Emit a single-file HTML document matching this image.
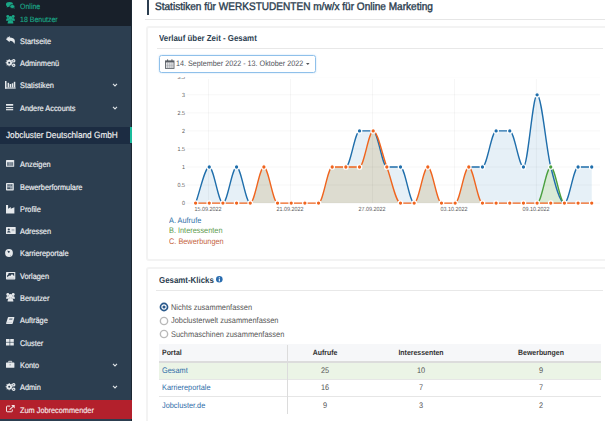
<!DOCTYPE html>
<html><head><meta charset="utf-8"><title>Statistiken</title>
<style>
html,body{margin:0;padding:0;}
body{width:605px;height:421px;overflow:hidden;position:relative;background:#fff;font-family:"Liberation Sans",sans-serif;}
.t{position:absolute;white-space:nowrap;text-rendering:geometricPrecision;}
.r{position:absolute;}
svg{position:absolute;overflow:visible;}
</style></head><body>
<div class='r' style='left:0.00px;top:0.00px;width:131.80px;height:421.00px;background:#2c3e50;'></div>
<div class='r' style='left:0.00px;top:0.00px;width:131.80px;height:25.70px;background:#18202a;'></div>
<div class='r' style='left:131.00px;top:0.00px;width:0.80px;height:421.00px;background:#1c2833;'></div>
<div class='t' style='left:19.80px;top:1.80px;font-size:7.7px;line-height:9.24px;color:#1aa786;-webkit-text-stroke:0.15px #1aa786;transform:scaleX(0.9091);transform-origin:left top;'>Online</div>
<div class='t' style='left:20.20px;top:15.00px;font-size:7.7px;line-height:9.24px;color:#1aa786;-webkit-text-stroke:0.15px #1aa786;transform:scaleX(0.9091);transform-origin:left top;'>18 Benutzer</div>
<div class='t' style='left:19.70px;top:36.90px;font-size:8.1px;line-height:9.72px;color:#eceef0;-webkit-text-stroke:0.18px #eceef0;transform:scaleX(0.9074);transform-origin:left top;'>Startseite</div>
<div class='t' style='left:19.70px;top:58.90px;font-size:8.1px;line-height:9.72px;color:#eceef0;-webkit-text-stroke:0.18px #eceef0;transform:scaleX(0.9074);transform-origin:left top;'>Adminmenü</div>
<div class='t' style='left:19.70px;top:81.00px;font-size:8.1px;line-height:9.72px;color:#eceef0;-webkit-text-stroke:0.18px #eceef0;transform:scaleX(0.9074);transform-origin:left top;'>Statistiken</div>
<div class='t' style='left:19.70px;top:103.50px;font-size:8.1px;line-height:9.72px;color:#eceef0;-webkit-text-stroke:0.18px #eceef0;transform:scaleX(0.9074);transform-origin:left top;'>Andere Accounts</div>
<svg style='left:111.60px;top:82.20px' width='6' height='6' viewBox='0 0 6 6'><path d='M1 1.8 L3 3.9 L5 1.8' fill='none' stroke='#dfe3e6' stroke-width='1.1'/></svg>
<svg style='left:111.60px;top:104.50px' width='6' height='6' viewBox='0 0 6 6'><path d='M1 1.8 L3 3.9 L5 1.8' fill='none' stroke='#dfe3e6' stroke-width='1.1'/></svg>
<div class='r' style='left:0.00px;top:127.40px;width:131.80px;height:16.20px;background:#1c2c42;'></div>
<div class='r' style='left:129.70px;top:126.90px;width:2.10px;height:16.50px;background:#1abc9c;'></div>
<div class='t' style='left:5.80px;top:130.20px;font-size:9.1px;line-height:10.92px;color:#f2f2f2;-webkit-text-stroke:0.15px #f2f2f2;transform:scaleX(0.9066);transform-origin:left top;'>Jobcluster Deutschland GmbH</div>
<div class='t' style='left:19.70px;top:160.10px;font-size:8.1px;line-height:9.72px;color:#eceef0;-webkit-text-stroke:0.18px #eceef0;transform:scaleX(0.9074);transform-origin:left top;'>Anzeigen</div>
<div class='t' style='left:19.70px;top:182.50px;font-size:8.1px;line-height:9.72px;color:#eceef0;-webkit-text-stroke:0.18px #eceef0;transform:scaleX(0.9074);transform-origin:left top;'>Bewerberformulare</div>
<div class='t' style='left:19.70px;top:205.00px;font-size:8.1px;line-height:9.72px;color:#eceef0;-webkit-text-stroke:0.18px #eceef0;transform:scaleX(0.9074);transform-origin:left top;'>Profile</div>
<div class='t' style='left:19.70px;top:227.00px;font-size:8.1px;line-height:9.72px;color:#eceef0;-webkit-text-stroke:0.18px #eceef0;transform:scaleX(0.9074);transform-origin:left top;'>Adressen</div>
<div class='t' style='left:19.70px;top:249.00px;font-size:8.1px;line-height:9.72px;color:#eceef0;-webkit-text-stroke:0.18px #eceef0;transform:scaleX(0.9074);transform-origin:left top;'>Karriereportale</div>
<div class='t' style='left:19.70px;top:271.50px;font-size:8.1px;line-height:9.72px;color:#eceef0;-webkit-text-stroke:0.18px #eceef0;transform:scaleX(0.9074);transform-origin:left top;'>Vorlagen</div>
<div class='t' style='left:19.70px;top:293.50px;font-size:8.1px;line-height:9.72px;color:#eceef0;-webkit-text-stroke:0.18px #eceef0;transform:scaleX(0.9074);transform-origin:left top;'>Benutzer</div>
<div class='t' style='left:19.70px;top:315.90px;font-size:8.1px;line-height:9.72px;color:#eceef0;-webkit-text-stroke:0.18px #eceef0;transform:scaleX(0.9074);transform-origin:left top;'>Aufträge</div>
<div class='t' style='left:19.70px;top:338.60px;font-size:8.1px;line-height:9.72px;color:#eceef0;-webkit-text-stroke:0.18px #eceef0;transform:scaleX(0.9074);transform-origin:left top;'>Cluster</div>
<div class='t' style='left:19.70px;top:360.50px;font-size:8.1px;line-height:9.72px;color:#eceef0;-webkit-text-stroke:0.18px #eceef0;transform:scaleX(0.9074);transform-origin:left top;'>Konto</div>
<div class='t' style='left:19.70px;top:383.30px;font-size:8.1px;line-height:9.72px;color:#eceef0;-webkit-text-stroke:0.18px #eceef0;transform:scaleX(0.9074);transform-origin:left top;'>Admin</div>
<svg style='left:111.60px;top:361.90px' width='6' height='6' viewBox='0 0 6 6'><path d='M1 1.8 L3 3.9 L5 1.8' fill='none' stroke='#dfe3e6' stroke-width='1.1'/></svg>
<svg style='left:111.60px;top:384.30px' width='6' height='6' viewBox='0 0 6 6'><path d='M1 1.8 L3 3.9 L5 1.8' fill='none' stroke='#dfe3e6' stroke-width='1.1'/></svg>
<div class='r' style='left:0.00px;top:400.20px;width:131.80px;height:19.10px;background:#b3202c;'></div>
<div class='t' style='left:19.70px;top:405.60px;font-size:8.1px;line-height:9.72px;color:#f4e6e7;-webkit-text-stroke:0.18px #f4e6e7;transform:scaleX(0.9074);transform-origin:left top;'>Zum Jobrecommender</div>
<svg style='left:5.60px;top:2.40px' width='8.8' height='6.8' viewBox='0 0 8.8 6.8'><ellipse cx='3.5' cy='2.4' rx='3.5' ry='2.35' fill='#1aa786'/><path d='M1.2 3.6 L0.7 5.4 L3.2 4.5Z' fill='#1aa786'/><ellipse cx='6.3' cy='4.5' rx='2.5' ry='2.0' fill='#1aa786' stroke='#18202a' stroke-width='0.7'/><path d='M7.4 6.0 L8.7 6.8 L8.2 5.3Z' fill='#1aa786'/></svg>
<svg style='left:5.70px;top:14.70px' width='9.0' height='8.5' viewBox='0 0 9.0 8.5'><circle cx='1.8' cy='1.45' r='1.45' fill='#1aa786'/><circle cx='7.2' cy='1.45' r='1.45' fill='#1aa786'/><path d='M0 5.8 Q0 3.0 1.8 3.0 Q3.2 3.0 3.4 4.2 L3.4 5.8Z' fill='#1aa786'/><path d='M9 5.8 Q9 3.0 7.2 3.0 Q5.8 3.0 5.6 4.2 L5.6 5.8Z' fill='#1aa786'/><circle cx='4.5' cy='3.0' r='1.9' fill='#1aa786'/><path d='M1.6 8.5 Q1.6 4.9 4.5 4.9 Q7.4 4.9 7.4 8.5Z' fill='#1aa786'/></svg>
<svg style='left:5.60px;top:36.20px' width='9' height='8' viewBox='0 0 9 8'><path d='M3.7 0.1 L0 3.3 L3.7 6.3 L3.7 4.7 Q6.9 4.6 8.3 7.9 Q9.3 6.2 8.7 4.1 Q7.8 1.6 3.7 1.6 Z' fill='#e6e9ec'/><path d='M2 0.9 L0.6 2.2' stroke='#e6e9ec' stroke-width='0.5'/></svg>
<svg style='left:6.00px;top:59.00px' width='9.6' height='8' viewBox='0 0 9.6 8'><rect x='2.75' y='0.15' width='0.9' height='1.0' fill='#e6e9ec' transform='rotate(0 3.2 3.7)'/><rect x='2.75' y='0.15' width='0.9' height='1.0' fill='#e6e9ec' transform='rotate(45 3.2 3.7)'/><rect x='2.75' y='0.15' width='0.9' height='1.0' fill='#e6e9ec' transform='rotate(90 3.2 3.7)'/><rect x='2.75' y='0.15' width='0.9' height='1.0' fill='#e6e9ec' transform='rotate(135 3.2 3.7)'/><rect x='2.75' y='0.15' width='0.9' height='1.0' fill='#e6e9ec' transform='rotate(180 3.2 3.7)'/><rect x='2.75' y='0.15' width='0.9' height='1.0' fill='#e6e9ec' transform='rotate(225 3.2 3.7)'/><rect x='2.75' y='0.15' width='0.9' height='1.0' fill='#e6e9ec' transform='rotate(270 3.2 3.7)'/><rect x='2.75' y='0.15' width='0.9' height='1.0' fill='#e6e9ec' transform='rotate(315 3.2 3.7)'/><circle cx='3.2' cy='3.7' r='1.95' fill='none' stroke='#e6e9ec' stroke-width='1.9'/><circle cx='7.7' cy='1.7' r='1.15' fill='none' stroke='#e6e9ec' stroke-width='1.2'/><circle cx='7.7' cy='6.2' r='1.15' fill='none' stroke='#e6e9ec' stroke-width='1.2'/></svg>
<svg style='left:6.00px;top:383.00px' width='9.6' height='8' viewBox='0 0 9.6 8'><rect x='2.75' y='0.15' width='0.9' height='1.0' fill='#e6e9ec' transform='rotate(0 3.2 3.7)'/><rect x='2.75' y='0.15' width='0.9' height='1.0' fill='#e6e9ec' transform='rotate(45 3.2 3.7)'/><rect x='2.75' y='0.15' width='0.9' height='1.0' fill='#e6e9ec' transform='rotate(90 3.2 3.7)'/><rect x='2.75' y='0.15' width='0.9' height='1.0' fill='#e6e9ec' transform='rotate(135 3.2 3.7)'/><rect x='2.75' y='0.15' width='0.9' height='1.0' fill='#e6e9ec' transform='rotate(180 3.2 3.7)'/><rect x='2.75' y='0.15' width='0.9' height='1.0' fill='#e6e9ec' transform='rotate(225 3.2 3.7)'/><rect x='2.75' y='0.15' width='0.9' height='1.0' fill='#e6e9ec' transform='rotate(270 3.2 3.7)'/><rect x='2.75' y='0.15' width='0.9' height='1.0' fill='#e6e9ec' transform='rotate(315 3.2 3.7)'/><circle cx='3.2' cy='3.7' r='1.95' fill='none' stroke='#e6e9ec' stroke-width='1.9'/><circle cx='7.7' cy='1.7' r='1.15' fill='none' stroke='#e6e9ec' stroke-width='1.2'/><circle cx='7.7' cy='6.2' r='1.15' fill='none' stroke='#e6e9ec' stroke-width='1.2'/></svg>
<svg style='left:5.00px;top:80.80px' width='10.7' height='7.6' viewBox='0 0 10.7 7.6'><rect x='0' y='0' width='1.5' height='7.6' fill='#e6e9ec'/><rect x='0' y='6.5' width='10.7' height='1.1' fill='#e6e9ec'/><rect x='2.6' y='1.8' width='1.5' height='4.7' fill='#e6e9ec'/><rect x='4.7' y='3.0' width='1.5' height='3.5' fill='#e6e9ec'/><rect x='6.8' y='2.3' width='1.5' height='4.2' fill='#e6e9ec'/><rect x='8.8' y='0.8' width='1.5' height='5.7' fill='#e6e9ec'/></svg>
<svg style='left:5.80px;top:104.00px' width='7.2' height='6.4' viewBox='0 0 7.2 6.4'><rect x='0' y='0' width='7.2' height='1.7' fill='#e6e9ec'/><rect x='0' y='3.0' width='7.2' height='1.2' fill='#e6e9ec'/><rect x='0' y='5.1' width='7.2' height='1.2' fill='#e6e9ec'/></svg>
<svg style='left:5.80px;top:160.20px' width='8.2' height='6.8' viewBox='0 0 8.2 6.8'><rect x='0' y='0' width='8.2' height='6.8' rx='0.6' fill='#e6e9ec'/><rect x='1.0' y='2.2' width='6.2' height='3.6' fill='#6e7c8a'/><rect x='2.9' y='2.2' width='0.6' height='3.6' fill='#a9b2bb'/><rect x='4.7' y='2.2' width='0.6' height='3.6' fill='#a9b2bb'/></svg>
<svg style='left:5.60px;top:182.80px' width='7.8' height='7.4' viewBox='0 0 7.8 7.4'><rect x='0' y='0' width='7.8' height='7.4' rx='0.7' fill='#e6e9ec'/><rect x='1.0' y='1.0' width='5.8' height='5.4' fill='#9aa5b0'/><circle cx='2.2' cy='2.1' r='0.55' fill='#2c3e50'/><circle cx='3.9' cy='2.1' r='0.55' fill='#2c3e50'/><circle cx='5.6' cy='2.1' r='0.55' fill='#2c3e50'/><rect x='1.4' y='4.6' width='2.6' height='1.2' fill='#2c3e50'/><rect x='4.0' y='5.0' width='2.2' height='0.6' fill='#5d6b79'/></svg>
<svg style='left:5.80px;top:204.60px' width='8.4' height='8.4' viewBox='0 0 8.4 8.4'><path d='M0 8.4 V0 H2.1 V3.8 L4.8 2.0 L4.8 3.8 L8.4 2.2 V8.4Z' fill='#e6e9ec'/></svg>
<svg style='left:5.80px;top:227.00px' width='9.7' height='7.0' viewBox='0 0 9.7 7.0'><rect x='0' y='0' width='9.7' height='7.0' rx='0.6' fill='#e6e9ec'/><circle cx='2.8' cy='2.5' r='1.1' fill='#2c3e50'/><path d='M1.0 5.6 Q1.0 3.9 2.8 3.9 Q4.6 3.9 4.6 5.6Z' fill='#2c3e50'/><rect x='5.6' y='2.0' width='2.8' height='0.7' fill='#9aa4ae'/><rect x='5.6' y='3.4' width='2.8' height='0.7' fill='#9aa4ae'/></svg>
<svg style='left:5.40px;top:249.20px' width='8' height='8' viewBox='0 0 8 8'><circle cx='4' cy='4' r='3.9' fill='#e6e9ec'/><path d='M2.4 1.7 Q3.6 1.5 4.2 2.3 L5.0 1.9 Q4.6 3.6 3.6 4.1 Q2.8 3.2 2.4 1.7Z' fill='#2c3e50'/><circle cx='5.6' cy='6.2' r='0.5' fill='#9aa4ae'/></svg>
<svg style='left:5.60px;top:271.80px' width='9.3' height='7.4' viewBox='0 0 9.3 7.4'><rect x='0' y='0' width='9.3' height='7.4' rx='0.6' fill='#e6e9ec'/><path d='M2.6 1.1 H8.2 V4.2 L6.0 2.0 L4.2 4.0 L3.4 3.4 L1.1 5.2 V3.4 Q2.6 3.0 2.6 1.1Z' fill='#2c3e50'/><rect x='1.1' y='5.8' width='7.1' height='0.6' fill='#aab3bc'/></svg>
<svg style='left:5.80px;top:293.40px' width='9.0' height='8.5' viewBox='0 0 9.0 8.5'><circle cx='1.8' cy='1.45' r='1.45' fill='#e6e9ec'/><circle cx='7.2' cy='1.45' r='1.45' fill='#e6e9ec'/><path d='M0 5.8 Q0 3.0 1.8 3.0 Q3.2 3.0 3.4 4.2 L3.4 5.8Z' fill='#e6e9ec'/><path d='M9 5.8 Q9 3.0 7.2 3.0 Q5.8 3.0 5.6 4.2 L5.6 5.8Z' fill='#e6e9ec'/><circle cx='4.5' cy='3.0' r='1.9' fill='#e6e9ec'/><path d='M1.6 8.5 Q1.6 4.9 4.5 4.9 Q7.4 4.9 7.4 8.5Z' fill='#e6e9ec'/></svg>
<svg style='left:5.80px;top:316.60px' width='8.5' height='6.9' viewBox='0 0 8.5 6.9'><path d='M2.6 0 H7.9 Q8.5 0 8.4 0.6 L6.8 6.3 Q6.6 6.9 6.0 6.9 H0.6 Q0 6.9 0.1 6.3 L1.9 0.6 Q2.0 0 2.6 0Z' fill='#e6e9ec'/><path d='M3.5 1.3 H6.6 L6.2 3.1 H3.0Z' fill='#8592a0'/><path d='M0.6 5.4 H6.3 L6.1 6.1 H0.4Z' fill='#b9c1c9'/></svg>
<svg style='left:5.80px;top:338.90px' width='7.8' height='6.5' viewBox='0 0 7.8 6.5'><rect x='0' y='0' width='3.6' height='2.9' fill='#e6e9ec'/><rect x='4.2' y='0' width='3.6' height='2.9' fill='#e6e9ec'/><rect x='0' y='3.5' width='3.6' height='3.0' fill='#e6e9ec'/><rect x='4.2' y='3.5' width='3.6' height='3.0' fill='#e6e9ec'/></svg>
<svg style='left:5.80px;top:360.60px' width='8.4' height='6.8' viewBox='0 0 8.4 6.8'><path d='M2.7 1.5 V0.3 H5.7 V1.5' fill='none' stroke='#e6e9ec' stroke-width='0.9'/><rect x='0' y='1.4' width='8.4' height='5.4' rx='0.6' fill='#e6e9ec'/><rect x='3.4' y='3.4' width='1.6' height='0.9' fill='#8a96a2'/></svg>
<svg style='left:5.80px;top:405.30px' width='8.7' height='7.3' viewBox='0 0 8.7 7.3'><path d='M4.2 1.1 H1.2 Q0.5 1.1 0.5 1.8 V6.1 Q0.5 6.8 1.2 6.8 H5.6 Q6.3 6.8 6.3 6.1 V4.4' fill='none' stroke='#f4e6e7' stroke-width='1'/><path d='M5.2 0 H8.7 V3.5Z' fill='#f4e6e7'/><path d='M7.8 0.9 L3.6 4.6' stroke='#f4e6e7' stroke-width='1.1'/></svg>
<div class='r' style='left:146.80px;top:0.00px;width:2.40px;height:14.50px;background:#2c3e50;'></div>
<div class='t' style='left:154.50px;top:1.20px;font-size:10.9px;line-height:13.08px;color:#2c3e50;-webkit-text-stroke:0.4px #2c3e50;transform:scaleX(0.9239);transform-origin:left top;'>Statistiken für WERKSTUDENTEN m/w/x für Online Marketing</div>
<div class='r' style='left:145.00px;top:19.00px;width:460.00px;height:1.20px;background:#e6e6e6;'></div>
<div class='r' style='left:146.3px;top:25.7px;width:480px;height:235.3px;border:2.6px solid #f3f3f3;border-radius:3px;box-sizing:border-box;'></div>
<div class='t' style='left:159.30px;top:33.40px;font-size:8.7px;line-height:10.44px;color:#2c3e50;font-weight:bold;transform:scaleX(0.9080);transform-origin:left top;'>Verlauf über Zeit - Gesamt</div>
<div class='r' style='left:156.90px;top:47.60px;width:446.50px;height:1.20px;background:#e8e8e8;'></div>
<div class='r' style='left:159.3px;top:55.2px;width:157.0px;height:17.4px;border:1.3px solid #8fc0ea;border-radius:2.5px;box-sizing:border-box;box-shadow:0 0 1.5px rgba(102,175,233,0.55);'></div>
<svg style='left:164.90px;top:59.00px' width='9.5' height='9.9' viewBox='0 0 9.5 9.9'><rect x='0.5' y='1.9' width='8.5' height='7.5' fill='#fff' stroke='#5a5f66' stroke-width='0.9'/><rect x='0.5' y='1.9' width='8.5' height='1.6' fill='#5a5f66'/><path d='M0.9 5.1 H8.6 M0.9 6.6 H8.6 M0.9 8.0 H8.6 M2.6 3.5 V9.3 M4.75 3.5 V9.3 M6.9 3.5 V9.3' stroke='#8b9096' stroke-width='0.5'/><rect x='2.0' y='0.2' width='1.1' height='2.3' rx='0.5' fill='#5a5f66'/><rect x='6.4' y='0.2' width='1.1' height='2.3' rx='0.5' fill='#5a5f66'/></svg>
<div class='t' style='left:176.20px;top:59.10px;font-size:7.9px;line-height:9.48px;color:#505459;transform:scaleX(0.9114);transform-origin:left top;'>14. September 2022 - 13. Oktober 2022</div>
<svg style='left:305.80px;top:63.00px' width='3.6' height='2.2' viewBox='0 0 3.6 2.2'><path d='M0 0 H3.6 L1.8 2.1Z' fill='#505459'/></svg>
<div class='r' style='left:0;top:77.0px;width:605px;height:140px;overflow:hidden'><svg style='left:0;top:0' width='605' height='140' viewBox='0 0 605 140'><path d='M195.6 126.1 C200.15 114.07 204.71 90.0 209.26 90.0 C213.81 90.0 218.37 126.1 222.92 126.1 C227.47 126.1 232.03 90.0 236.58 90.0 C241.13 90.0 245.69 126.1 250.24 126.1 C254.79 126.1 259.35 90.0 263.9 90.0 C268.45 90.0 273.01 126.1 277.56 126.1 C282.11 126.1 286.67 126.1 291.22 126.1 C295.77 126.1 300.33 126.1 304.88 126.1 C309.43 126.1 313.99 126.1 318.54 126.1 C323.09 126.1 327.65 90.0 332.2 90.0 C336.75 90.0 341.31 90.0 345.86 90.0 C350.41 90.0 354.97 53.9 359.52 53.9 C364.07 53.9 368.63 53.9 373.18 53.9 C377.73 53.9 382.29 90.0 386.84 90.0 C391.39 90.0 395.95 90.0 400.5 90.0 C405.05 90.0 409.61 126.1 414.16 126.1 C418.71 126.1 423.27 90.0 427.82 90.0 C432.37 90.0 436.93 126.1 441.48 126.1 C446.03 126.1 450.59 126.1 455.14 126.1 C459.69 126.1 464.25 90.0 468.8 90.0 C473.35 90.0 477.91 90.0 482.46 90.0 C487.01 90.0 491.57 53.9 496.12 53.9 C500.67 53.9 505.23 53.9 509.78 53.9 C514.33 53.9 518.89 90.0 523.44 90.0 C527.99 90.0 532.55 17.8 537.1 17.8 C541.65 17.8 546.21 71.95 550.76 90.0 C555.31 108.05 559.87 126.1 564.42 126.1 C568.97 126.1 573.53 90.0 578.08 90.0 C582.63 90.0 587.19 90.0 591.74 90.0 L591.74 126.10 L195.60 126.10Z' fill='#e6f0f7' stroke='none'/><path d='M195.6 126.1 C200.15 126.1 204.71 126.1 209.26 126.1 C213.81 126.1 218.37 126.1 222.92 126.1 C227.47 126.1 232.03 126.1 236.58 126.1 C241.13 126.1 245.69 126.1 250.24 126.1 C254.79 126.1 259.35 90.0 263.9 90.0 C268.45 90.0 273.01 126.1 277.56 126.1 C282.11 126.1 286.67 126.1 291.22 126.1 C295.77 126.1 300.33 126.1 304.88 126.1 C309.43 126.1 313.99 126.1 318.54 126.1 C323.09 126.1 327.65 90.0 332.2 90.0 C336.75 90.0 341.31 90.0 345.86 90.0 C350.41 90.0 354.97 90.0 359.52 90.0 C364.07 90.0 368.63 53.9 373.18 53.9 C377.73 53.9 382.29 77.97 386.84 90.0 C391.39 102.03 395.95 126.1 400.5 126.1 C405.05 126.1 409.61 126.1 414.16 126.1 C418.71 126.1 423.27 90.0 427.82 90.0 C432.37 90.0 436.93 126.1 441.48 126.1 C446.03 126.1 450.59 126.1 455.14 126.1 C459.69 126.1 464.25 90.0 468.8 90.0 C473.35 90.0 477.91 126.1 482.46 126.1 C487.01 126.1 491.57 126.1 496.12 126.1 C500.67 126.1 505.23 126.1 509.78 126.1 C514.33 126.1 518.89 126.1 523.44 126.1 C527.99 126.1 532.55 126.1 537.1 126.1 C541.65 126.1 546.21 90.0 550.76 90.0 C555.31 90.0 559.87 126.1 564.42 126.1 C568.97 126.1 573.53 126.1 578.08 126.1 C582.63 126.1 587.19 126.1 591.74 126.1 L591.74 126.10 L195.60 126.10Z' fill='#d9ead6' stroke='none'/><path d='M195.6 126.1 C200.15 126.1 204.71 126.1 209.26 126.1 C213.81 126.1 218.37 126.1 222.92 126.1 C227.47 126.1 232.03 126.1 236.58 126.1 C241.13 126.1 245.69 126.1 250.24 126.1 C254.79 126.1 259.35 90.0 263.9 90.0 C268.45 90.0 273.01 126.1 277.56 126.1 C282.11 126.1 286.67 126.1 291.22 126.1 C295.77 126.1 300.33 126.1 304.88 126.1 C309.43 126.1 313.99 126.1 318.54 126.1 C323.09 126.1 327.65 90.0 332.2 90.0 C336.75 90.0 341.31 90.0 345.86 90.0 C350.41 90.0 354.97 90.0 359.52 90.0 C364.07 90.0 368.63 53.9 373.18 53.9 C377.73 53.9 382.29 77.97 386.84 90.0 C391.39 102.03 395.95 126.1 400.5 126.1 C405.05 126.1 409.61 126.1 414.16 126.1 C418.71 126.1 423.27 90.0 427.82 90.0 C432.37 90.0 436.93 126.1 441.48 126.1 C446.03 126.1 450.59 126.1 455.14 126.1 C459.69 126.1 464.25 90.0 468.8 90.0 C473.35 90.0 477.91 126.1 482.46 126.1 C487.01 126.1 491.57 126.1 496.12 126.1 C500.67 126.1 505.23 126.1 509.78 126.1 C514.33 126.1 518.89 126.1 523.44 126.1 C527.99 126.1 532.55 126.1 537.1 126.1 C541.65 126.1 546.21 126.1 550.76 126.1 C555.31 126.1 559.87 126.1 564.42 126.1 C568.97 126.1 573.53 126.1 578.08 126.1 C582.63 126.1 587.19 126.1 591.74 126.1 L591.74 126.10 L195.60 126.10Z' fill='#dddcd0' stroke='none'/><line x1='186.4' y1='126.10' x2='600' y2='126.10' stroke='rgba(0,0,0,0.035)' stroke-width='1'/><line x1='186.4' y1='108.05' x2='600' y2='108.05' stroke='rgba(0,0,0,0.035)' stroke-width='1'/><line x1='186.4' y1='90.00' x2='600' y2='90.00' stroke='rgba(0,0,0,0.035)' stroke-width='1'/><line x1='186.4' y1='71.95' x2='600' y2='71.95' stroke='rgba(0,0,0,0.035)' stroke-width='1'/><line x1='186.4' y1='53.90' x2='600' y2='53.90' stroke='rgba(0,0,0,0.035)' stroke-width='1'/><line x1='186.4' y1='35.85' x2='600' y2='35.85' stroke='rgba(0,0,0,0.035)' stroke-width='1'/><line x1='186.4' y1='17.80' x2='600' y2='17.80' stroke='rgba(0,0,0,0.035)' stroke-width='1'/><line x1='186.4' y1='-0.25' x2='600' y2='-0.25' stroke='rgba(0,0,0,0.035)' stroke-width='1'/><line x1='208.56' y1='2' x2='208.56' y2='126.10' stroke='rgba(0,0,0,0.04)' stroke-width='1'/><line x1='290.52' y1='2' x2='290.52' y2='126.10' stroke='rgba(0,0,0,0.04)' stroke-width='1'/><line x1='372.48' y1='2' x2='372.48' y2='126.10' stroke='rgba(0,0,0,0.04)' stroke-width='1'/><line x1='454.44' y1='2' x2='454.44' y2='126.10' stroke='rgba(0,0,0,0.04)' stroke-width='1'/><line x1='536.40' y1='2' x2='536.40' y2='126.10' stroke='rgba(0,0,0,0.04)' stroke-width='1'/><path d='M195.6 126.1 C200.15 114.07 204.71 90.0 209.26 90.0 C213.81 90.0 218.37 126.1 222.92 126.1 C227.47 126.1 232.03 90.0 236.58 90.0 C241.13 90.0 245.69 126.1 250.24 126.1 M345.86 90.0 C350.41 90.0 354.97 53.9 359.52 53.9 C364.07 53.9 368.63 53.9 373.18 53.9 C377.73 53.9 382.29 90.0 386.84 90.0 C391.39 90.0 395.95 90.0 400.5 90.0 C405.05 90.0 409.61 126.1 414.16 126.1 M468.8 90.0 C473.35 90.0 477.91 90.0 482.46 90.0 C487.01 90.0 491.57 53.9 496.12 53.9 C500.67 53.9 505.23 53.9 509.78 53.9 C514.33 53.9 518.89 90.0 523.44 90.0 C527.99 90.0 532.55 17.8 537.1 17.8 C541.65 17.8 546.21 71.95 550.76 90.0 C555.31 108.05 559.87 126.1 564.42 126.1 C568.97 126.1 573.53 90.0 578.08 90.0 C582.63 90.0 587.19 90.0 591.74 90.0' fill='none' stroke='#1f6eab' stroke-width='1.4'/><circle cx='209.26' cy='90.00' r='2.25' fill='#1f6eab' stroke='#fff' stroke-width='1.2'/><circle cx='236.58' cy='90.00' r='2.25' fill='#1f6eab' stroke='#fff' stroke-width='1.2'/><circle cx='359.52' cy='53.90' r='2.25' fill='#1f6eab' stroke='#fff' stroke-width='1.2'/><circle cx='400.50' cy='90.00' r='2.25' fill='#1f6eab' stroke='#fff' stroke-width='1.2'/><circle cx='482.46' cy='90.00' r='2.25' fill='#1f6eab' stroke='#fff' stroke-width='1.2'/><circle cx='496.12' cy='53.90' r='2.25' fill='#1f6eab' stroke='#fff' stroke-width='1.2'/><circle cx='509.78' cy='53.90' r='2.25' fill='#1f6eab' stroke='#fff' stroke-width='1.2'/><circle cx='523.44' cy='90.00' r='2.25' fill='#1f6eab' stroke='#fff' stroke-width='1.2'/><circle cx='537.10' cy='17.80' r='2.25' fill='#1f6eab' stroke='#fff' stroke-width='1.2'/><circle cx='578.08' cy='90.00' r='2.25' fill='#1f6eab' stroke='#fff' stroke-width='1.2'/><circle cx='591.74' cy='90.00' r='2.25' fill='#1f6eab' stroke='#fff' stroke-width='1.2'/><path d='M537.1 126.1 C541.65 126.1 546.21 90.0 550.76 90.0 C555.31 90.0 559.87 126.1 564.42 126.1' fill='none' stroke='#4aa03f' stroke-width='1.4'/><circle cx='550.76' cy='90.00' r='2.25' fill='#4aa03f' stroke='#fff' stroke-width='1.2'/><path d='M195.6 126.1 C200.15 126.1 204.71 126.1 209.26 126.1 C213.81 126.1 218.37 126.1 222.92 126.1 C227.47 126.1 232.03 126.1 236.58 126.1 C241.13 126.1 245.69 126.1 250.24 126.1 C254.79 126.1 259.35 90.0 263.9 90.0 C268.45 90.0 273.01 126.1 277.56 126.1 C282.11 126.1 286.67 126.1 291.22 126.1 C295.77 126.1 300.33 126.1 304.88 126.1 C309.43 126.1 313.99 126.1 318.54 126.1 C323.09 126.1 327.65 90.0 332.2 90.0 C336.75 90.0 341.31 90.0 345.86 90.0 C350.41 90.0 354.97 90.0 359.52 90.0 C364.07 90.0 368.63 53.9 373.18 53.9 C377.73 53.9 382.29 77.97 386.84 90.0 C391.39 102.03 395.95 126.1 400.5 126.1 C405.05 126.1 409.61 126.1 414.16 126.1 C418.71 126.1 423.27 90.0 427.82 90.0 C432.37 90.0 436.93 126.1 441.48 126.1 C446.03 126.1 450.59 126.1 455.14 126.1 C459.69 126.1 464.25 90.0 468.8 90.0 C473.35 90.0 477.91 126.1 482.46 126.1 C487.01 126.1 491.57 126.1 496.12 126.1 C500.67 126.1 505.23 126.1 509.78 126.1 C514.33 126.1 518.89 126.1 523.44 126.1 C527.99 126.1 532.55 126.1 537.1 126.1 C541.65 126.1 546.21 126.1 550.76 126.1 C555.31 126.1 559.87 126.1 564.42 126.1 C568.97 126.1 573.53 126.1 578.08 126.1 C582.63 126.1 587.19 126.1 591.74 126.1' fill='none' stroke='#f0641e' stroke-width='1.4'/><circle cx='195.60' cy='126.10' r='2.25' fill='#f0641e' stroke='#fff' stroke-width='1.2'/><circle cx='209.26' cy='126.10' r='2.25' fill='#f0641e' stroke='#fff' stroke-width='1.2'/><circle cx='222.92' cy='126.10' r='2.25' fill='#f0641e' stroke='#fff' stroke-width='1.2'/><circle cx='236.58' cy='126.10' r='2.25' fill='#f0641e' stroke='#fff' stroke-width='1.2'/><circle cx='250.24' cy='126.10' r='2.25' fill='#f0641e' stroke='#fff' stroke-width='1.2'/><circle cx='263.90' cy='90.00' r='2.25' fill='#f0641e' stroke='#fff' stroke-width='1.2'/><circle cx='277.56' cy='126.10' r='2.25' fill='#f0641e' stroke='#fff' stroke-width='1.2'/><circle cx='291.22' cy='126.10' r='2.25' fill='#f0641e' stroke='#fff' stroke-width='1.2'/><circle cx='304.88' cy='126.10' r='2.25' fill='#f0641e' stroke='#fff' stroke-width='1.2'/><circle cx='318.54' cy='126.10' r='2.25' fill='#f0641e' stroke='#fff' stroke-width='1.2'/><circle cx='332.20' cy='90.00' r='2.25' fill='#f0641e' stroke='#fff' stroke-width='1.2'/><circle cx='345.86' cy='90.00' r='2.25' fill='#f0641e' stroke='#fff' stroke-width='1.2'/><circle cx='359.52' cy='90.00' r='2.25' fill='#f0641e' stroke='#fff' stroke-width='1.2'/><circle cx='373.18' cy='53.90' r='2.25' fill='#f0641e' stroke='#fff' stroke-width='1.2'/><circle cx='386.84' cy='90.00' r='2.25' fill='#f0641e' stroke='#fff' stroke-width='1.2'/><circle cx='400.50' cy='126.10' r='2.25' fill='#f0641e' stroke='#fff' stroke-width='1.2'/><circle cx='414.16' cy='126.10' r='2.25' fill='#f0641e' stroke='#fff' stroke-width='1.2'/><circle cx='427.82' cy='90.00' r='2.25' fill='#f0641e' stroke='#fff' stroke-width='1.2'/><circle cx='441.48' cy='126.10' r='2.25' fill='#f0641e' stroke='#fff' stroke-width='1.2'/><circle cx='455.14' cy='126.10' r='2.25' fill='#f0641e' stroke='#fff' stroke-width='1.2'/><circle cx='468.80' cy='90.00' r='2.25' fill='#f0641e' stroke='#fff' stroke-width='1.2'/><circle cx='482.46' cy='126.10' r='2.25' fill='#f0641e' stroke='#fff' stroke-width='1.2'/><circle cx='496.12' cy='126.10' r='2.25' fill='#f0641e' stroke='#fff' stroke-width='1.2'/><circle cx='509.78' cy='126.10' r='2.25' fill='#f0641e' stroke='#fff' stroke-width='1.2'/><circle cx='523.44' cy='126.10' r='2.25' fill='#f0641e' stroke='#fff' stroke-width='1.2'/><circle cx='537.10' cy='126.10' r='2.25' fill='#f0641e' stroke='#fff' stroke-width='1.2'/><circle cx='550.76' cy='126.10' r='2.25' fill='#f0641e' stroke='#fff' stroke-width='1.2'/><circle cx='564.42' cy='126.10' r='2.25' fill='#f0641e' stroke='#fff' stroke-width='1.2'/><circle cx='578.08' cy='126.10' r='2.25' fill='#f0641e' stroke='#fff' stroke-width='1.2'/><circle cx='591.74' cy='126.10' r='2.25' fill='#f0641e' stroke='#fff' stroke-width='1.2'/></svg><div class='t' style='left:-114.60px;width:300px;text-align:right;top:124.10px;font-size:5.95px;line-height:7.14px;color:#5c5c5c;transform:scaleX(0.9076);transform-origin:right top;'>0</div>
<div class='t' style='left:-114.60px;width:300px;text-align:right;top:106.05px;font-size:5.95px;line-height:7.14px;color:#5c5c5c;transform:scaleX(0.9076);transform-origin:right top;'>0.5</div>
<div class='t' style='left:-114.60px;width:300px;text-align:right;top:88.00px;font-size:5.95px;line-height:7.14px;color:#5c5c5c;transform:scaleX(0.9076);transform-origin:right top;'>1</div>
<div class='t' style='left:-114.60px;width:300px;text-align:right;top:69.95px;font-size:5.95px;line-height:7.14px;color:#5c5c5c;transform:scaleX(0.9076);transform-origin:right top;'>1.5</div>
<div class='t' style='left:-114.60px;width:300px;text-align:right;top:51.90px;font-size:5.95px;line-height:7.14px;color:#5c5c5c;transform:scaleX(0.9076);transform-origin:right top;'>2</div>
<div class='t' style='left:-114.60px;width:300px;text-align:right;top:33.85px;font-size:5.95px;line-height:7.14px;color:#5c5c5c;transform:scaleX(0.9076);transform-origin:right top;'>2.5</div>
<div class='t' style='left:-114.60px;width:300px;text-align:right;top:15.80px;font-size:5.95px;line-height:7.14px;color:#5c5c5c;transform:scaleX(0.9076);transform-origin:right top;'>3</div>
<div class='t' style='left:-114.60px;width:300px;text-align:right;top:-2.25px;font-size:5.95px;line-height:7.14px;color:#5c5c5c;transform:scaleX(0.9076);transform-origin:right top;'>3.5</div>
</div>
<div class='t' style='left:108.46px;width:200px;text-align:center;top:206.60px;font-size:5.95px;line-height:7.14px;color:#5c5c5c;transform:scaleX(0.9076);transform-origin:center top;'>15.09.2022</div>
<div class='t' style='left:190.42px;width:200px;text-align:center;top:206.60px;font-size:5.95px;line-height:7.14px;color:#5c5c5c;transform:scaleX(0.9076);transform-origin:center top;'>21.09.2022</div>
<div class='t' style='left:272.38px;width:200px;text-align:center;top:206.60px;font-size:5.95px;line-height:7.14px;color:#5c5c5c;transform:scaleX(0.9076);transform-origin:center top;'>27.09.2022</div>
<div class='t' style='left:354.34px;width:200px;text-align:center;top:206.60px;font-size:5.95px;line-height:7.14px;color:#5c5c5c;transform:scaleX(0.9076);transform-origin:center top;'>03.10.2022</div>
<div class='t' style='left:436.30px;width:200px;text-align:center;top:206.60px;font-size:5.95px;line-height:7.14px;color:#5c5c5c;transform:scaleX(0.9076);transform-origin:center top;'>09.10.2022</div>
<div class='t' style='left:169.00px;top:215.50px;font-size:8.1px;line-height:9.72px;color:#2f6fa8;transform:scaleX(0.9074);transform-origin:left top;'>A. Aufrufe</div>
<div class='t' style='left:169.00px;top:226.00px;font-size:8.1px;line-height:9.72px;color:#5b9a4c;transform:scaleX(0.9074);transform-origin:left top;'>B. Interessenten</div>
<div class='t' style='left:169.00px;top:236.60px;font-size:8.1px;line-height:9.72px;color:#c4623c;transform:scaleX(0.9074);transform-origin:left top;'>C. Bewerbungen</div>
<div class='r' style='left:146.3px;top:266.9px;width:480px;height:200px;border:2.6px solid #f3f3f3;border-radius:3px;box-sizing:border-box;'></div>
<div class='t' style='left:159.00px;top:274.90px;font-size:8.7px;line-height:10.44px;color:#2c3e50;font-weight:bold;transform:scaleX(0.9080);transform-origin:left top;'>Gesamt-Klicks</div>
<svg style='left:215.90px;top:276.40px' width='6.6' height='6.6' viewBox='0 0 6.6 6.6'><circle cx='3.3' cy='3.3' r='3.3' fill='#2a6db0'/><rect x='2.8' y='2.8' width='1.1' height='2.6' fill='#fff'/><rect x='2.8' y='1.3' width='1.1' height='1' fill='#fff'/></svg>
<div class='r' style='left:156.40px;top:290.20px;width:447.00px;height:1.20px;background:#e8e8e8;'></div>
<svg style='left:158.60px;top:302.40px' width='10' height='10' viewBox='0 0 10 10'><circle cx='5' cy='5' r='3.55' fill='#fff' stroke='#2b5a8c' stroke-width='1.7'/><circle cx='5' cy='5' r='1.55' fill='#2b5a8c'/></svg>
<svg style='left:158.60px;top:315.50px' width='10' height='10' viewBox='0 0 10 10'><circle cx='5' cy='5' r='3.65' fill='#fff' stroke='#b9b9b9' stroke-width='1.4'/></svg>
<svg style='left:158.60px;top:328.70px' width='10' height='10' viewBox='0 0 10 10'><circle cx='5' cy='5' r='3.65' fill='#fff' stroke='#b9b9b9' stroke-width='1.4'/></svg>
<div class='t' style='left:170.60px;top:303.20px;font-size:8.2px;line-height:9.84px;color:#555;transform:scaleX(0.9085);transform-origin:left top;'>Nichts zusammenfassen</div>
<div class='t' style='left:170.60px;top:316.30px;font-size:8.2px;line-height:9.84px;color:#555;transform:scaleX(0.9085);transform-origin:left top;'>Jobclusterwelt zusammenfassen</div>
<div class='t' style='left:170.60px;top:329.50px;font-size:8.2px;line-height:9.84px;color:#555;transform:scaleX(0.9085);transform-origin:left top;'>Suchmaschinen zusammenfassen</div>
<div class='r' style='left:159.40px;top:344.30px;width:441.60px;height:16.90px;background:#f6f7f9;'></div>
<div class='r' style='left:159.40px;top:361.20px;width:441.60px;height:1.70px;background:#dcdcdc;'></div>
<div class='r' style='left:159.40px;top:362.90px;width:441.60px;height:16.60px;background:#ebf4e6;'></div>
<div class='r' style='left:159.40px;top:379.20px;width:441.60px;height:0.90px;background:#e6e6e6;'></div>
<div class='r' style='left:159.40px;top:396.10px;width:441.60px;height:0.90px;background:#e6e6e6;'></div>
<div class='r' style='left:286.60px;top:344.50px;width:1.00px;height:69.40px;background:#dcdcdc;'></div>
<div class='t' style='left:162.40px;top:347.90px;font-size:7.65px;line-height:9.18px;color:#333;font-weight:bold;transform:scaleX(0.9085);transform-origin:left top;'>Portal</div>
<div class='t' style='left:224.50px;width:200px;text-align:center;top:347.90px;font-size:7.65px;line-height:9.18px;color:#333;font-weight:bold;transform:scaleX(0.9085);transform-origin:center top;'>Aufrufe</div>
<div class='t' style='left:321.10px;width:200px;text-align:center;top:347.90px;font-size:7.65px;line-height:9.18px;color:#333;font-weight:bold;transform:scaleX(0.9085);transform-origin:center top;'>Interessenten</div>
<div class='t' style='left:441.20px;width:200px;text-align:center;top:347.90px;font-size:7.65px;line-height:9.18px;color:#333;font-weight:bold;transform:scaleX(0.9085);transform-origin:center top;'>Bewerbungen</div>
<div class='t' style='left:162.40px;top:366.00px;font-size:8.1px;line-height:9.72px;color:#2d6ca8;transform:scaleX(0.9074);transform-origin:left top;'>Gesamt</div>
<div class='t' style='left:224.50px;width:200px;text-align:center;top:366.00px;font-size:8.1px;line-height:9.72px;color:#555;transform:scaleX(0.9074);transform-origin:center top;'>25</div>
<div class='t' style='left:321.10px;width:200px;text-align:center;top:366.00px;font-size:8.1px;line-height:9.72px;color:#555;transform:scaleX(0.9074);transform-origin:center top;'>10</div>
<div class='t' style='left:441.20px;width:200px;text-align:center;top:366.00px;font-size:8.1px;line-height:9.72px;color:#555;transform:scaleX(0.9074);transform-origin:center top;'>9</div>
<div class='t' style='left:162.40px;top:383.30px;font-size:8.1px;line-height:9.72px;color:#2d6ca8;transform:scaleX(0.9074);transform-origin:left top;'>Karriereportale</div>
<div class='t' style='left:224.50px;width:200px;text-align:center;top:383.30px;font-size:8.1px;line-height:9.72px;color:#555;transform:scaleX(0.9074);transform-origin:center top;'>16</div>
<div class='t' style='left:321.10px;width:200px;text-align:center;top:383.30px;font-size:8.1px;line-height:9.72px;color:#555;transform:scaleX(0.9074);transform-origin:center top;'>7</div>
<div class='t' style='left:441.20px;width:200px;text-align:center;top:383.30px;font-size:8.1px;line-height:9.72px;color:#555;transform:scaleX(0.9074);transform-origin:center top;'>7</div>
<div class='t' style='left:162.40px;top:400.70px;font-size:8.1px;line-height:9.72px;color:#2d6ca8;transform:scaleX(0.9074);transform-origin:left top;'>Jobcluster.de</div>
<div class='t' style='left:224.50px;width:200px;text-align:center;top:400.70px;font-size:8.1px;line-height:9.72px;color:#555;transform:scaleX(0.9074);transform-origin:center top;'>9</div>
<div class='t' style='left:321.10px;width:200px;text-align:center;top:400.70px;font-size:8.1px;line-height:9.72px;color:#555;transform:scaleX(0.9074);transform-origin:center top;'>3</div>
<div class='t' style='left:441.20px;width:200px;text-align:center;top:400.70px;font-size:8.1px;line-height:9.72px;color:#555;transform:scaleX(0.9074);transform-origin:center top;'>2</div>
</body></html>
